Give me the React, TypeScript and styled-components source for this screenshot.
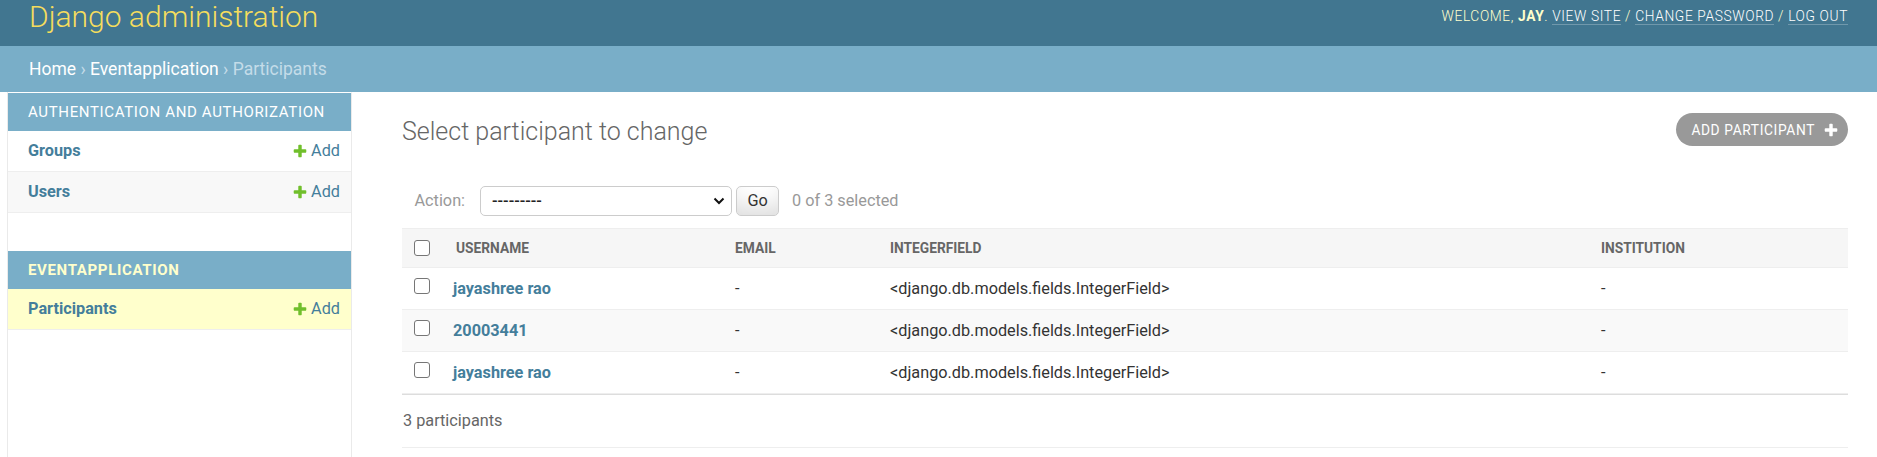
import React from "react";
import styled, { createGlobalStyle } from "styled-components";

const GlobalStyle = createGlobalStyle`
  html, body {
    margin: 0;
    padding: 0;
    background: #fff;
  }
  body {
    font-family: Roboto, "Liberation Sans", Arial, sans-serif;
    font-size: 17.5px;
    color: #333;
  }
  *, *::before, *::after {
    box-sizing: border-box;
  }
`;

const PLUS_PATH =
  "M1600 796v192q0 40-28 68t-68 28h-416v416q0 40-28 68t-68 28h-192q-40 0-68-28t-28-68v-416h-416q-40 0-68-28t-28-68v-192q0-40 28-68t68-28h416v-416q0-40 28-68t68-28h192q40 0 68 28t28 68v416h416q40 0 68 28t28 68z";

const PlusIcon = ({ color }: { color: string }) => (
  <svg width="16" height="16" viewBox="0 0 1792 1792" aria-hidden="true">
    <path fill={color} d={PLUS_PATH} />
  </svg>
);

// header
const Header = styled.header`
  display: flex;
  justify-content: space-between;
  align-items: center;
  height: 46px;
  padding: 0 29px 14px;
  background: #417690;
  color: #ffc;
`;

const Branding = styled.h1`
  margin: 0;
  font-size: 30px;
  font-weight: 300;
  line-height: 35px;
  color: #f5dd5d;
`;

const UserTools = styled.div`
  font-size: 13.75px;
  font-weight: 300;
  letter-spacing: 0.625px;
  text-transform: uppercase;
  color: #ffc;
`;

const UserName = styled.strong`
  font-weight: 700;
`;

const ToolLink = styled.a`
  color: #fff;
  text-decoration: none;
  border-bottom: 1px solid rgba(255, 255, 255, 0.25);
`;

const Breadcrumbs = styled.div`
  height: 46px;
  padding: 12.5px 29px;
  background: #79aec8;
  color: #c4dce8;
  font-size: 17.5px;
  line-height: 21px;
`;

const Crumb = styled.a`
  color: #fff;
  text-decoration: none;
`;

// layout
const Main = styled.div`
  display: flex;
  min-height: calc(100vh - 92px);
`;

const ToggleStrip = styled.div`
  flex: 0 0 8px;
  border-right: 1px solid #eaeaea;
`;

const Sidebar = styled.nav`
  flex: 0 0 344px;
  border-top: 1px solid transparent;
  border-right: 1px solid #eaeaea;
`;

const Module = styled.section`
  margin-bottom: 38px;
`;

const Caption = styled.div<{ $current?: boolean }>`
  padding: 10px 20px;
  line-height: 18px;
  font-size: 15px;
  letter-spacing: 0.65px;
  text-transform: uppercase;
  white-space: nowrap;
  overflow: hidden;
  background: #79aec8;
  color: ${(p) => (p.$current ? "#ffc" : "#fff")};
  font-weight: ${(p) => (p.$current ? 700 : 400)};
`;

const rowBackgrounds = {
  plain: "#fff",
  alt: "#f8f8f8",
  current: "#ffc",
};

const ModelRow = styled.div<{ $tone: keyof typeof rowBackgrounds }>`
  display: flex;
  justify-content: space-between;
  align-items: center;
  padding: 10px 11px 10px 20px;
  font-size: 16.25px;
  line-height: 20px;
  border-bottom: 1px solid #eee;
  background: ${(p) => rowBackgrounds[p.$tone]};
`;

const ModelName = styled.a`
  color: #447e9b;
  font-weight: 700;
  text-decoration: none;
`;

const AddLink = styled.a`
  display: inline-flex;
  align-items: center;
  gap: 3px;
  color: #447e9b;
  text-decoration: none;
`;

// content
const Content = styled.main`
  flex: 1;
  min-width: 0;
  padding: 25px 29px 0 50px;
`;

const TitleRow = styled.div`
  display: flex;
  justify-content: space-between;
  align-items: flex-start;
  margin-bottom: 27px;
`;

const Title = styled.h1`
  margin: 0;
  font-size: 25px;
  font-weight: 300;
  line-height: 29px;
  color: #666;
`;

const AddButton = styled.a`
  display: flex;
  align-items: center;
  gap: 8px;
  height: 33px;
  margin-top: -4px;
  padding: 0 9px 0 15px;
  border-radius: 17px;
  background: #999;
  color: #fff;
  font-size: 13.75px;
  letter-spacing: 0.625px;
  text-transform: uppercase;
  text-decoration: none;
`;

const ActionBar = styled.div`
  display: flex;
  align-items: center;
  padding: 12.5px;
  font-size: 16.25px;
  line-height: 30px;
  color: #999;
`;

const ActionLabel = styled.label`
  margin-right: 15px;
`;

const SelectBox = styled.div`
  display: flex;
  justify-content: space-between;
  align-items: center;
  width: 252px;
  height: 30px;
  padding: 0 6px 0 11px;
  border: 1px solid #ccc;
  border-radius: 5px;
  background: #fff;
  color: #222;
  font-size: 16.25px;
  font-weight: 500;
`;

const GoButton = styled.button`
  width: 43px;
  height: 30px;
  margin-left: 4px;
  padding: 0;
  border: 1px solid #ccc;
  border-radius: 5px;
  background: #fff;
  box-shadow: 0 -19px 25px -12px rgba(0, 0, 0, 0.15) inset;
  font-family: inherit;
  font-size: 16.25px;
  color: #333;
`;

const Counter = styled.span`
  margin-left: 13px;
`;

const ResultTable = styled.table`
  width: 100%;
  border-collapse: separate;
  border-spacing: 0;
  table-layout: fixed;
`;

const HeadCell = styled.th<{ $check?: boolean }>`
  padding: ${(p) => (p.$check ? "10px 0 10px 12px" : "10px")};
  line-height: 18px;
  vertical-align: middle;
  background: #f6f6f6;
  border-top: 1px solid #eee;
  border-bottom: 1px solid #eee;
  font-size: 13.75px;
  font-weight: 700;
  color: #666;
  text-transform: uppercase;
  text-align: left;
  white-space: nowrap;
`;

const BodyRow = styled.tr<{ $alt?: boolean }>`
  background: ${(p) => (p.$alt ? "#f9f9f9" : "#fff")};
`;

const BodyCell = styled.td<{ $check?: boolean; $link?: boolean }>`
  padding: ${(p) =>
    p.$check ? "10px 0 10px 12px" : p.$link ? "10px 10px 10px 7px" : "10px"};
  line-height: 21px;
  vertical-align: top;
  border-bottom: 1px solid #eee;
  font-size: 16.25px;
  color: #333;
  white-space: nowrap;
`;

const UserLink = styled.a`
  color: #447e9b;
  font-weight: 700;
  text-decoration: none;
`;

const Checkbox = styled.span`
  display: block;
  width: 16px;
  height: 16px;
  border: 1px solid #767676;
  border-radius: 3px;
  background: #fff;
`;

const Paginator = styled.p`
  margin: 0;
  padding: 12px 0 12px 1px;
  line-height: 28px;
  font-size: 16.25px;
  color: #666;
  border-top: 1px solid #ddd;
  border-bottom: 1px solid #eee;
`;

const participants = ["jayashree rao", "20003441", "jayashree rao"];
const columns = ["Username", "Email", "IntegerField", "Institution"];

export default function App() {
  return (
    <>
      <GlobalStyle />
      <Header>
        <Branding>Django administration</Branding>
        <UserTools>
          Welcome, <UserName>Jay</UserName>. <ToolLink href="#">View site</ToolLink> /{" "}
          <ToolLink href="#">Change password</ToolLink> / <ToolLink href="#">Log out</ToolLink>
        </UserTools>
      </Header>
      <Breadcrumbs>
        <Crumb href="#">Home</Crumb> › <Crumb href="#">Eventapplication</Crumb> › Participants
      </Breadcrumbs>
      <Main>
        <ToggleStrip />
        <Sidebar>
          <Module>
            <Caption>Authentication and Authorization</Caption>
            <ModelRow $tone="plain">
              <ModelName href="#">Groups</ModelName>
              <AddLink href="#">
                <PlusIcon color="#70bf2b" />
                Add
              </AddLink>
            </ModelRow>
            <ModelRow $tone="alt">
              <ModelName href="#">Users</ModelName>
              <AddLink href="#">
                <PlusIcon color="#70bf2b" />
                Add
              </AddLink>
            </ModelRow>
          </Module>
          <Module>
            <Caption $current>Eventapplication</Caption>
            <ModelRow $tone="current">
              <ModelName href="#">Participants</ModelName>
              <AddLink href="#">
                <PlusIcon color="#70bf2b" />
                Add
              </AddLink>
            </ModelRow>
          </Module>
        </Sidebar>
        <Content>
          <TitleRow>
            <Title>Select participant to change</Title>
            <AddButton href="#">
              Add participant
              <PlusIcon color="#fff" />
            </AddButton>
          </TitleRow>
          <ActionBar>
            <ActionLabel>Action:</ActionLabel>
            <SelectBox>
              <span>---------</span>
              <svg width="12" height="8" viewBox="0 0 12 8" aria-hidden="true">
                <polyline points="1.5,1.5 6,6 10.5,1.5" fill="none" stroke="#111" strokeWidth="2" />
              </svg>
            </SelectBox>
            <GoButton>Go</GoButton>
            <Counter>0 of 3 selected</Counter>
          </ActionBar>
          <ResultTable>
            <colgroup>
              <col style={{ width: 44 }} />
              <col style={{ width: 279 }} />
              <col style={{ width: 155 }} />
              <col style={{ width: 711 }} />
              <col />
            </colgroup>
            <thead>
              <tr>
                <HeadCell $check>
                  <Checkbox />
                </HeadCell>
                {columns.map((c) => (
                  <HeadCell key={c}>{c}</HeadCell>
                ))}
              </tr>
            </thead>
            <tbody>
              {participants.map((name, i) => (
                <BodyRow key={i} $alt={i % 2 === 1}>
                  <BodyCell $check>
                    <Checkbox />
                  </BodyCell>
                  <BodyCell $link>
                    <UserLink href="#">{name}</UserLink>
                  </BodyCell>
                  <BodyCell>-</BodyCell>
                  <BodyCell>{"<django.db.models.fields.IntegerField>"}</BodyCell>
                  <BodyCell>-</BodyCell>
                </BodyRow>
              ))}
            </tbody>
          </ResultTable>
          <Paginator>3 participants</Paginator>
        </Content>
      </Main>
    </>
  );
}
